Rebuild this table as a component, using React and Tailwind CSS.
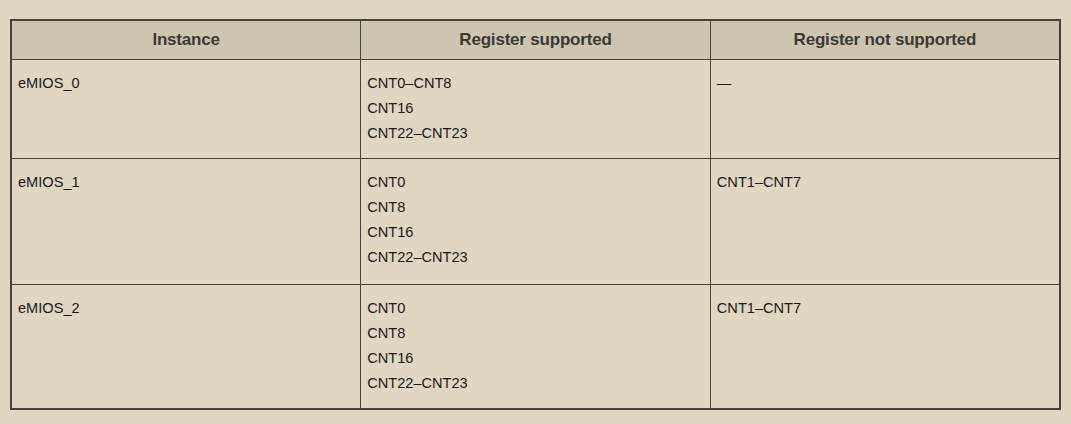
export default function App() {
  const rows = [
    { inst: "eMIOS_0", sup: ["CNT0–CNT8", "CNT16", "CNT22–CNT23"], not: ["—"], h: "h-[99px]" },
    { inst: "eMIOS_1", sup: ["CNT0", "CNT8", "CNT16", "CNT22–CNT23"], not: ["CNT1–CNT7"], h: "h-[126px]" },
    { inst: "eMIOS_2", sup: ["CNT0", "CNT8", "CNT16", "CNT22–CNT23"], not: ["CNT1–CNT7"], h: "h-[125px]" },
  ];
  const td = "border border-[#45433a] align-top px-[6px] pt-[11px] text-[14.6px] leading-[25px] text-[#1a1a1a]";
  return (
    <div className="w-[1071px] h-[424px] bg-[#dfd7c0] pt-[19px] px-[10px]" style={{ fontFamily: '"Liberation Sans", Arial, sans-serif' }}>
      <table className="w-[1051px] border-collapse border-2 border-[#45433a] table-fixed">
        <thead>
          <tr className="bg-[#ccc6af] h-[39px]">
            {["Instance", "Register supported", "Register not supported"].map((h) => (
              <th key={h} className="border border-[#45433a] text-[17px] font-bold tracking-[-0.2px] text-[#3b3a33] text-center align-middle">{h}</th>
            ))}
          </tr>
        </thead>
        <tbody>
          {rows.map((r) => (
            <tr key={r.inst} className={r.h}>
              <td className={td}>{r.inst}</td>
              <td className={td}>
                {r.sup.map((s) => <div key={s}>{s}</div>)}
              </td>
              <td className={td}>
                {r.not.map((s) => <div key={s}>{s}</div>)}
              </td>
            </tr>
          ))}
        </tbody>
      </table>
    </div>
  );
}
